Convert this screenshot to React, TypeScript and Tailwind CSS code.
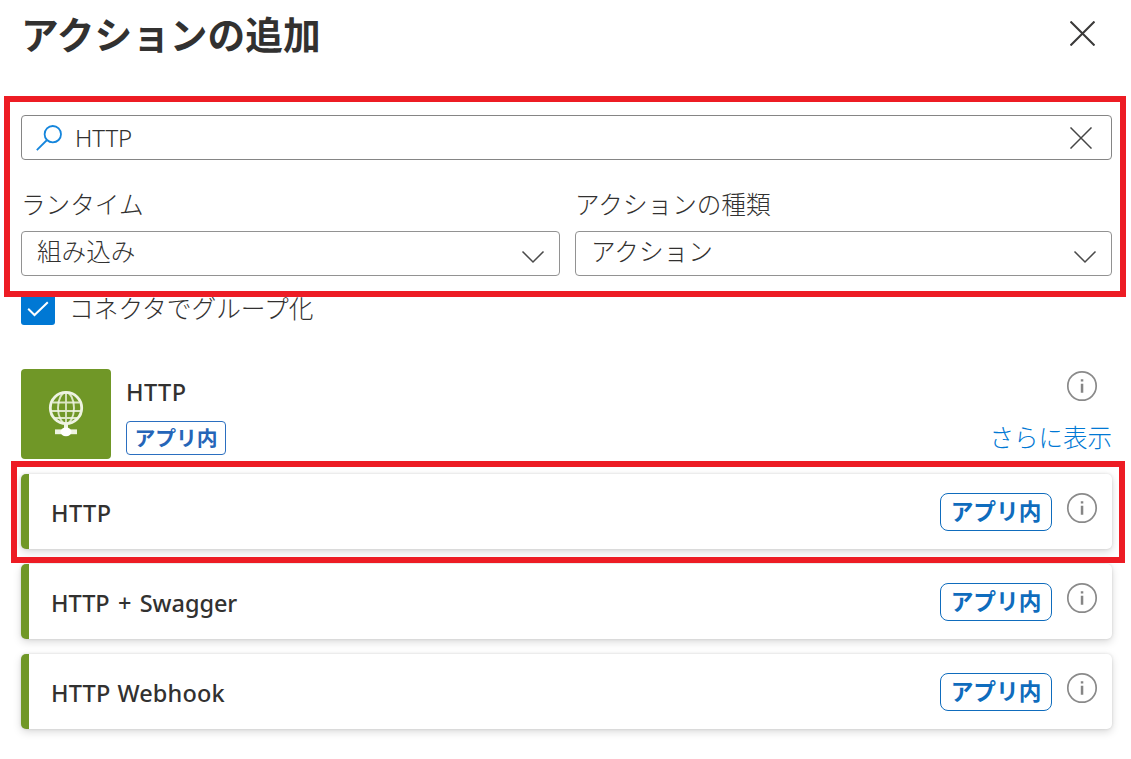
import React from "react";

const FONT = "font-['Noto_Sans','Noto_Sans_CJK_JP',sans-serif]";

function Cross({ className }: { className: string }) {
  return (
    <svg viewBox="0 0 24 24" className={className} fill="none" stroke="currentColor" aria-hidden="true">
      <path d="M0.5 0.5 23.5 23.5M23.5 0.5 0.5 23.5" />
    </svg>
  );
}

function Info() {
  return (
    <svg viewBox="0 0 32 32" className="size-8 shrink-0" aria-hidden="true">
      <circle cx="16" cy="16" r="14.2" fill="none" stroke="#8a8a8a" strokeWidth="1.7" />
      <path d="M14.8 9.2h2.5v2.3h-2.5zM14.8 13.8h2.5v9h-2.5z" fill="#858585" />
    </svg>
  );
}

function Globe() {
  return (
    <svg viewBox="0 0 36 48" className="h-12 w-9" fill="none" stroke="#eef3e2" aria-hidden="true">
      <circle cx="18" cy="18" r="15.7" strokeWidth="2.8" />
      <ellipse cx="18" cy="18" rx="8" ry="15.5" strokeOpacity="0.85" strokeWidth="1.9" />
      <path d="M18 2.5v31M4.5 12.5h27M2.5 21h31M6 28h24" strokeOpacity="0.85" strokeWidth="1.8" />
      <path d="M18 34v5" strokeWidth="4" />
      <path d="M7 41.8h22" strokeWidth="4.8" />
      <ellipse cx="18" cy="41.8" rx="5.5" ry="4.4" fill="#fff" stroke="none" />
    </svg>
  );
}

function Select({ label, value, width }: { label: string; value: string; width: string }) {
  return (
    <div className={width}>
      <div className="h-[43px] pt-[6px] text-[24.6px] leading-[22px] font-light">{label}</div>
      <div className="flex h-[45px] items-center justify-between rounded-[4px] border-[1.5px] border-[#929292] pr-[14px] pl-[15px]">
        <span className="-mt-[4px] text-[24.6px] leading-10 font-light">{value}</span>
        <svg viewBox="0 0 24 14" className="mt-[6px] h-[14px] w-6" fill="none" stroke="#4a4a4a" strokeWidth="1.5" aria-hidden="true">
          <path d="M1.5 1.5 12 12 22.5 1.5" />
        </svg>
      </div>
    </div>
  );
}

function Action({ name, tracking }: { name: string; tracking: string }) {
  return (
    <li className="flex h-[75px] items-center rounded-[5px] border-l-8 border-[#709727] bg-white pr-[14px] pl-[22px] shadow-[0_3px_8px_rgba(0,0,0,0.15),0_0_3px_rgba(0,0,0,0.12)]">
      <span className={`flex-1 pt-[2px] text-[23.5px] leading-8 font-medium ${tracking}`}>{name}</span>
      <span className="flex h-[38px] w-[112px] items-center justify-center rounded-[8px] border-[1.5px] border-[#0f6cbd] text-[22.7px] leading-8 font-bold text-[#0f6cbd]">
        アプリ内
      </span>
      <span className="-mt-[7px] ml-[14px]">
        <Info />
      </span>
    </li>
  );
}

export default function App() {
  return (
    <main className={`relative h-[759px] w-[1131px] overflow-hidden bg-white pr-[19px] pl-[21px] text-[#323130] ${FONT}`}>
      <header className="flex h-[115px] items-start justify-between pr-[17px]">
        <h1 className="pt-[10px] text-[37.7px] leading-[50px] font-bold">アクションの追加</h1>
        <Cross className="mt-[21px] size-[25px] stroke-2 text-[#3b3a39]" />
      </header>

      <div className="flex h-[45px] items-center rounded-[4px] border-[1.5px] border-[#858585] pr-[19px] pl-[14px]">
        <svg viewBox="0 0 26 26" className="size-[26px]" fill="none" stroke="#1485dc" strokeWidth="1.8" aria-hidden="true">
          <circle cx="16.8" cy="9.2" r="8.2" />
          <path d="M11 15 .8 25.2" />
        </svg>
        <span className="flex-1 pt-px pl-[13px] text-[24px] leading-8 font-light tracking-[-0.1px]">HTTP</span>
        <Cross className="size-[22px] stroke-[1.6] text-[#454545]" />
      </div>

      <div className="flex justify-between pt-[28px]">
        <Select label="ランタイム" value="組み込み" width="w-[539px]" />
        <Select label="アクションの種類" value="アクション" width="w-[537px]" />
      </div>

      <div className="mt-[15px] flex h-[34px] items-center">
        <span className="flex size-[34px] items-center justify-center rounded-[3px] bg-[#0078d4]">
          <svg viewBox="0 0 22 16" className="mt-[2px] h-4 w-[22px]" fill="none" stroke="white" strokeWidth="2" aria-hidden="true">
            <path d="M1.2 7.8 7.5 14 20.8 1.2" />
          </svg>
        </span>
        <span className="pt-px pl-[14px] text-[24.7px] leading-[34px] font-light">コネクタでグループ化</span>
      </div>

      <section className="mt-[44px]">
        <div className="flex h-[90px]">
          <div className="flex size-[90px] items-center justify-center rounded-[4px] bg-[#709727]">
            <Globe />
          </div>
          <div className="flex flex-1 flex-col items-start pl-[15px]">
            <span className="pt-[7px] text-[23.5px] leading-8 font-medium tracking-[0.4px]">HTTP</span>
            <span className="mt-[13px] flex h-[34px] w-[100px] items-center justify-center rounded-[4px] border-[1.5px] border-[#2b6fc0] text-[20.8px] leading-7 font-bold text-[#2565b8]">
              アプリ内
            </span>
          </div>
          <div className="flex flex-col items-end">
            <span className="mt-px mr-[14px]">
              <Info />
            </span>
            <a className="mt-[18px] text-[24.5px] leading-9 font-light text-[#0078d4]">さらに表示</a>
          </div>
        </div>
        <ul className="mt-[15px] flex flex-col gap-[15px]">
          <Action name="HTTP" tracking="tracking-[0.4px]" />
          <Action name="HTTP + Swagger" tracking="tracking-[-0.05px] [word-spacing:2.3px]" />
          <Action name="HTTP Webhook" tracking="tracking-[0.14px] [word-spacing:0.8px]" />
        </ul>
      </section>

      <div className="pointer-events-none absolute top-[96px] left-[4px] h-[201px] w-[1122px] border-[6px] border-[#ed1c24]" />
      <div className="pointer-events-none absolute top-[461px] left-[11px] h-[102px] w-[1114px] border-[6px] border-[#ed1c24]" />
    </main>
  );
}
